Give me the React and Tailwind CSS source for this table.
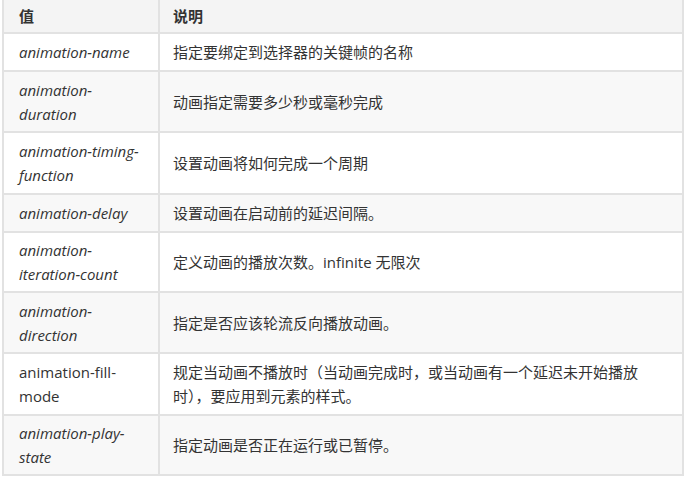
const rows = [
  { name: ["animation-name"], desc: "指定要绑定到选择器的关键帧的名称", h: "h-[38px]" },
  { name: ["animation-", "duration"], desc: "动画指定需要多少秒或毫秒完成", h: "h-[61px]" },
  { name: ["animation-timing-", "function"], desc: "设置动画将如何完成一个周期", h: "h-[62px]" },
  { name: ["animation-delay"], desc: "设置动画在启动前的延迟间隔。", h: "h-[38px]" },
  { name: ["animation-", "iteration-count"], desc: "定义动画的播放次数。infinite 无限次", h: "h-[60px]" },
  { name: ["animation-", "direction"], desc: "指定是否应该轮流反向播放动画。", h: "h-[61px]" },
  {
    name: ["animation-fill-", "mode"],
    desc: ["规定当动画不播放时（当动画完成时，或当动画有一个延迟未开始播放", "时），要应用到元素的样式。"],
    h: "h-[62px]",
    plain: true,
  },
  { name: ["animation-play-", "state"], desc: "指定动画是否正在运行或已暂停。", h: "h-[60px]" },
];

const App = () => {
  return (
    <div
      className="w-[686px] h-[477px] bg-white pl-[2px] pr-[2px] overflow-hidden"
      style={{ fontFamily: '"Open Sans", "Noto Sans CJK SC", sans-serif' }}
    >
      <table className="w-[682px] border-collapse table-fixed text-[15px] text-[#333] leading-[24px]">
        <colgroup>
          <col className="w-[156px]" />
          <col />
        </colgroup>
        <thead>
          <tr className="h-[33px] bg-[#f4f4f4]">
            <th className="border-2 border-t-0 border-[#e2e2e2] px-[15px] text-left font-bold">值</th>
            <th className="border-2 border-t-0 border-[#e2e2e2] px-[13px] text-left font-bold">说明</th>
          </tr>
        </thead>
        <tbody>
          {rows.map((row, i) => (
            <tr key={i} className={`${row.h} ${i % 2 === 1 ? "bg-[#f8f8f8]" : "bg-white"}`}>
              <td className={`border-2 border-[#e2e2e2] px-[15px] align-middle ${row.plain ? "" : "italic"}`}>
                {row.name.map((n, j) => (
                  <div key={j}>{n}</div>
                ))}
              </td>
              <td className="border-2 border-[#e2e2e2] px-[13px] align-middle">
                {Array.isArray(row.desc) ? row.desc.map((d, j) => <div key={j}>{d}</div>) : row.desc}
              </td>
            </tr>
          ))}
        </tbody>
      </table>
    </div>
  );
};

export default App;
